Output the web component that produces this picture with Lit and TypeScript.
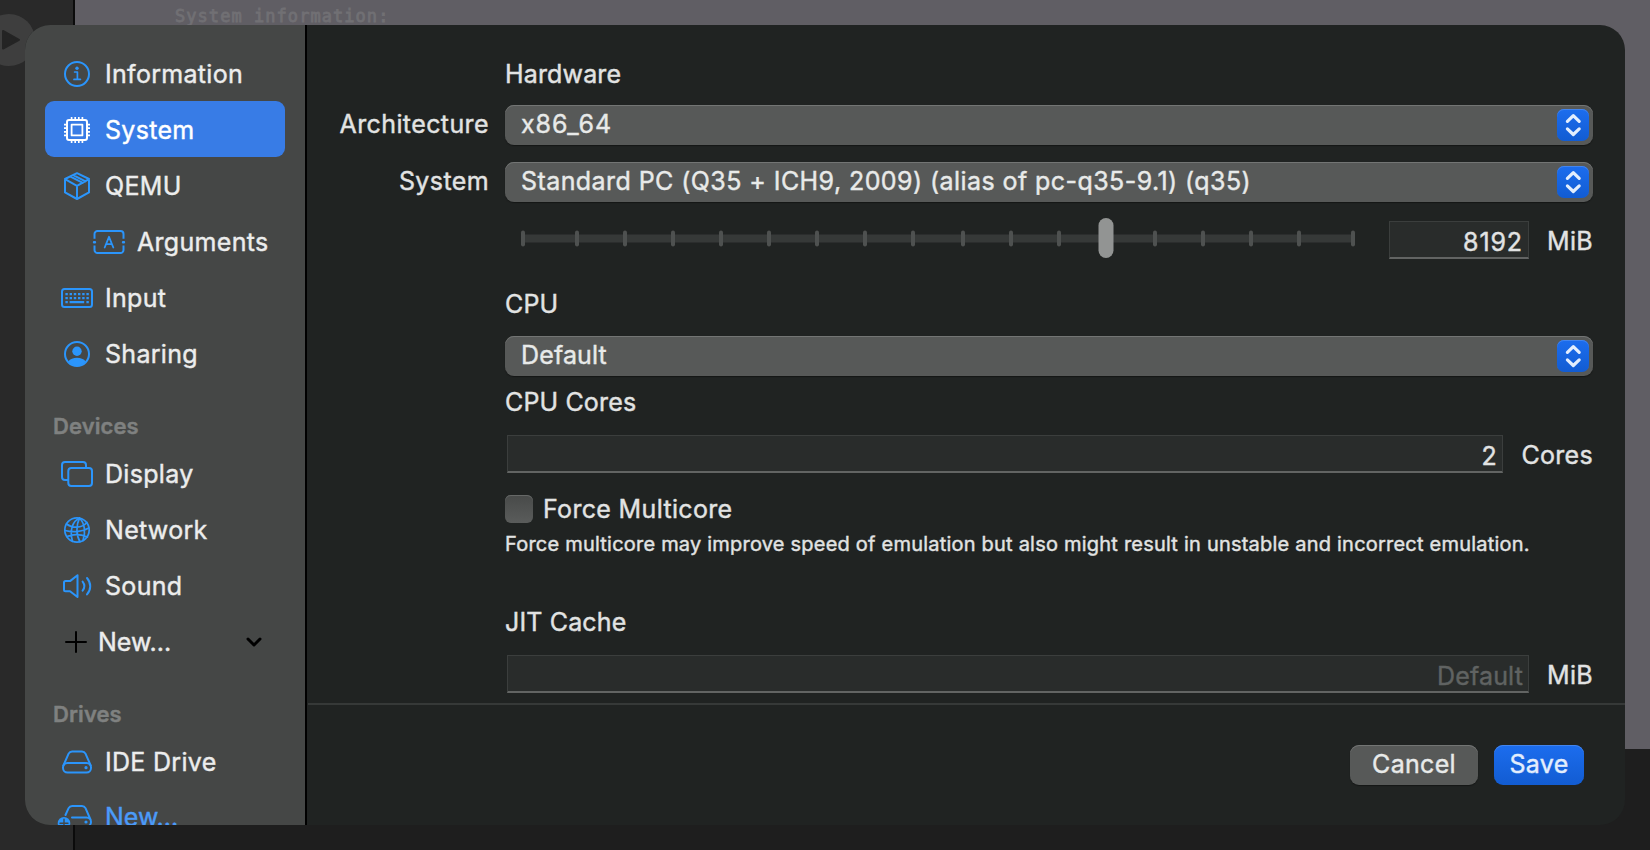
import { LitElement, html, css, svg } from "lit";
import { customElement } from "lit/decorators.js";

const ic = {
  info: svg`<circle cx="17" cy="17" r="12"/><circle cx="17" cy="11.2" r="1.7" fill="currentColor" stroke="none"/><path d="M14.6 15h2.8v7.2M14 22.4h6.4" stroke-width="1.7"/>`,
  chip: svg`<rect x="7" y="7" width="20" height="20" rx="2"/><rect x="11.6" y="11.6" width="10.8" height="10.8" stroke-width="1.8"/><path stroke-width="1.7" stroke-linecap="butt" d="M11.6 4v3M15.2 4v3M18.8 4v3M22.4 4v3M11.6 27v3M15.2 27v3M18.8 27v3M22.4 27v3M4 11.6h3M4 15.2h3M4 18.8h3M4 22.4h3M27 11.6h3M27 15.2h3M27 18.8h3M27 22.4h3"/>`,
  box: svg`<path d="M17 4.2 29 10v13.4L17 30 5 23.400V10zM5 10.200l12 6.600 12-6.600M17 16.800V30M10.500 7.600l12.300 6.300M13.200 6.200l12.300 6.200"/>`,
  args: svg`<path stroke-linecap="butt" d="M2.500 13.800V9a3 3 0 0 1 3-3H28.500a3 3 0 0 1 3 3V13.800M2.500 20.600v4.400a3 3 0 0 0 3 3H28.500a3 3 0 0 0 3-3V20.600"/><path d="M2 17.200h1M31 17.200h1" stroke-width="2.400"/><path d="M12.700 22.500 17 11.800l4.300 10.700M14.200 19.200h5.600" stroke-width="1.800"/>`,
  kbd: svg`<rect x="2" y="8" width="30" height="18" rx="2.500"/><g stroke-linecap="butt" stroke-width="2.200"><path d="M5.400 13.100H29M5.400 17.100H29" stroke-dasharray="2.400 1.800"/><path d="M5.400 21.200h2.400M9.600 21.200h14.600M26.400 21.200h2.400"/></g>`,
  user: svg`<circle cx="17" cy="17" r="12"/><circle cx="17" cy="14.200" r="4.700" fill="currentColor" stroke="none"/><path d="M8.300 24.500c3.500-5 13.900-5 17.400 0-4 5.600-13.400 5.600-17.400 0z" fill="currentColor" stroke="none"/>`,
  display: svg`<path d="M8 23H5a3 3 0 0 1-3-3V8a3 3 0 0 1 3-3h18a3 3 0 0 1 3 3v2"/><rect x="8.300" y="11" width="23.700" height="18" rx="3"/>`,
  globe: svg`<g stroke-width="1.700"><circle cx="17" cy="17" r="12.200"/><path d="M19.500 5C12 8.500 9.500 18 12.500 28.500M19.500 5C16 12 16 22 20 28.800M19.500 5c5 5 6.500 14 3.500 22.500M6.500 11c6 4.500 15 4.500 20.500-1.500M5 17.500c8 2 17 1 23.800-2.500M7 23.500c6-2.500 14-2 20.500.5"/></g>`,
  sound: svg`<path d="M4 13.600a1.500 1.500 0 0 1 1.500-1.500H10L17.500 6.200V28L10 22.300H5.500A1.500 1.500 0 0 1 4 20.800z"/><path d="M22.600 12.600c2.200 2.800 2.200 6.200 0 9M27 9c4.300 5 4.300 11.400 0 16.400"/>`,
  drive: svg`<path d="M3.400 20.500 8.600 8.600a4 4 0 0 1 3.500-2.100H22a4 4 0 0 1 3.500 2.100l5.200 11.900"/><rect x="3" y="18" width="28" height="9.500" rx="4.500"/><circle cx="26" cy="22.700" r="1.600" fill="currentColor" stroke="none"/>`,
};
const drvNew = svg`<path d="M5.500 15 8.600 8.100a4 4 0 0 1 3.500-2.100H22a4 4 0 0 1 3.500 2.100l5.200 11.900M12 17.500h14.500a4.500 4.500 0 0 1 0 9H10"/><circle cx="26" cy="22" r="1.600" fill="currentColor" stroke="none"/><circle cx="4" cy="23.300" r="6.300" fill="currentColor" stroke="none"/><path d="M4 19.300v8M0 23.300h8" stroke="#454746" stroke-width="1.400"/>`;

const icon = (g: unknown) => html`<svg class="ico" viewBox="0 0 34 34">${g}</svg>`;
const item = (g: unknown, t: string, c = "") => html`<div class="item ${c}">${icon(g)}<span>${t}</span></div>`;
const select = (t: string, c = "") => html`<div class="select ${c}"><span>${t}</span><div class="knob"><svg viewBox="0 0 32 32"><path d="M10.400 12.300 16.300 6.600l5.900 5.700M10.400 19.900l5.900 5.600 5.900-5.600"/></svg></div></div>`;

@customElement("app-root")
export class AppRoot extends LitElement {
  static styles = css`
    :host { display: block; position: relative; width: 1650px; height: 850px; overflow: hidden; background: #1e1e1e;
      font: 400 25px/32px Inter, "Liberation Sans", sans-serif; color: #e2e3e3; letter-spacing: .15px; -webkit-text-stroke: .4px currentColor; }
    * { box-sizing: border-box; }
    svg { fill: none; stroke: currentColor; stroke-width: 2; stroke-linecap: round; stroke-linejoin: round; overflow: visible; display: block; }
    .backdrop { position: absolute; inset: 0; display: grid; grid-template-columns: 73px 2px 1fr; grid-template-rows: 749px 1fr; }
    .rail { grid-row: 1 / 3; background: #292929; }
    .edge { grid-row: 1 / 3; background: #0b0b0b; }
    .console { background: #605e64; color: #717074; overflow: hidden; }
    .console p { margin: 7px 0 0 100px; letter-spacing: 1.050px; white-space: pre; font: 17px/18px "DejaVu Sans Mono", monospace; -webkit-text-stroke: .8px currentColor; }
    .play { position: absolute; left: -17px; top: 14px; width: 52px; height: 52px; border-radius: 50%; background: #3e3e3e; color: #242424; }
    .play svg { width: 52px; height: 52px; }
    .sheet { position: absolute; left: 25px; top: 25px; width: 1600px; height: 800px; border-radius: 25px; overflow: hidden; display: flex; background: #202322; }
    .side { width: 282px; border-right: 2px solid #000; background: #454746; padding: 20px 20px 0; flex: none; color: #eceded; letter-spacing: .3px; }
    .item { height: 56px; display: flex; align-items: center; padding: 2px 0 0 15px; border-radius: 9px; white-space: nowrap; }
    .item .ico { width: 34px; height: 34px; margin-right: 11px; color: #2b95fb; flex: none; }
    .item.on { background: #387ce6; color: #fff; }
    .item.on .ico { color: #fff; }
    .item.sub { padding-left: 47px; }
    .item.last { color: #4b9bfa; padding-top: 0; letter-spacing: 0; }
    .head { height: 48px; margin-top: 16px; padding: 13px 0 0 8px; font-size: 22px; font-weight: 600; color: #7f8180; letter-spacing: .1px; }
    .new { height: 56px; display: flex; align-items: center; padding: 2px 19px 0 20px; letter-spacing: 0; }
    .new svg { color: #000; }
    .new .plus { width: 22px; height: 22px; margin-right: 11px; }
    .new .chev { width: 16px; height: 10px; margin-left: auto; margin-right: 4px; stroke-width: 3; }
    .main { flex: 1; display: flex; flex-direction: column; min-width: 0; }
    .form { height: 680px; padding: 33px 32px 0 23px; border-bottom: 2px solid #363938; margin-left: 1px; display: grid; grid-template-columns: 158px 1088px; column-gap: 16px; align-content: start; flex: none; }
    .lab { text-align: right; white-space: nowrap; padding-top: 3px; letter-spacing: .4px; }
    .c2 { grid-column: 2; }
    .select { height: 40px; border-radius: 9px; background: #575958; box-shadow: inset 0 1px #737574, 0 1px 1px #151716; padding: 0 4px 0 16px; display: flex; justify-content: space-between; align-items: center; color: #e8eae9; }
    .select.arch { letter-spacing: .95px; }
    .select.machine { letter-spacing: .43px; }
    .select span { margin-top: -3px; }
    .knob { width: 32px; height: 32px; border-radius: 7px; background: linear-gradient(#1c6dee, #125cd2); box-shadow: inset 0 1px #4385ee; color: #e3eefd; }
    .knob svg { width: 32px; height: 32px; stroke-width: 3.200; }
    .title { height: 47px; }
    .cell { height: 57px; }
    .row { display: flex; align-items: center; }
    .memory { height: 42px; }
    .cpu { margin-top: 27px; height: 48px; }
    .cores { margin-top: 10px; }
    .entry { margin: 17px 0 0 2px; }
    .force { margin-top: 20px; letter-spacing: .33px; }
    .slider { height: 40px; width: 834px; margin-left: 16px; }
    .field { height: 38px; background: #292c2b; border: 1px solid #3b3e3d; border-bottom: 2px solid #626463; text-align: right; line-height: 40px; padding-right: 5px; }
    .w-mem { width: 140px; margin-left: 34px; letter-spacing: .9px; }
    .w-cores { width: 996px; }
    .w-jit { width: 1022px; color: #606362; }
    .unit { margin-left: auto; padding-top: 1px; letter-spacing: .3px; }
    .box { width: 28px; height: 28px; border-radius: 6px; background: linear-gradient(#484a49, #5a5c5b); box-shadow: inset 0 1px #666867; margin-right: 10px; }
    .note { font-size: 20px; line-height: 26px; white-space: nowrap; letter-spacing: .215px; margin-top: 6px; }
    .jit { margin-top: 49px; }
    .foot { display: flex; justify-content: flex-end; gap: 16px; padding: 40px 41px 0 0; letter-spacing: .3px; }
    .btn { height: 40px; border-radius: 9px; line-height: 38px; text-align: center; background: #575958; box-shadow: inset 0 1px #737574, 0 1px 1px #151716; color: #e8eae9; }
    .cancel { width: 128px; }
    .save { width: 90px; background: linear-gradient(#1c6dee, #125cd2); box-shadow: inset 0 1px #4385ee; color: #e3eefd; }
  `;

  render() {
    const ticks = [523, 577, 625, 673, 721, 769, 817, 865, 913, 963, 1011, 1059, 1155, 1203, 1251, 1299, 1353];
    return html`
      <div class="backdrop"><div class="rail"></div><div class="edge"></div><div class="console"><p>System information:</p></div></div>
      <div class="play"><svg viewBox="0 0 52 52"><path d="M20 17v17.500l16-8.700z" fill="currentColor"/></svg></div>
      <div class="sheet">
        <nav class="side">
          ${item(ic.info, "Information")}${item(ic.chip, "System", "on")}${item(ic.box, "QEMU")}
          ${item(ic.args, "Arguments", "sub")}${item(ic.kbd, "Input")}${item(ic.user, "Sharing")}
          <div class="head">Devices</div>
          ${item(ic.display, "Display")}${item(ic.globe, "Network")}${item(ic.sound, "Sound")}
          <div class="new"><svg class="plus" viewBox="0 0 22 22"><path d="M11 1v20M1 11h20"/></svg><span>New...</span>
            <svg class="chev" viewBox="0 0 16 10"><path d="M2 2l6 6 6-6"/></svg></div>
          <div class="head">Drives</div>
          ${item(ic.drive, "IDE Drive")}${item(drvNew, "New...", "last")}
        </nav>
        <main class="main">
          <section class="form">
            <div class="c2 title">Hardware</div>
            <div class="lab">Architecture</div>
            <div class="cell">${select("x86_64", "arch")}</div>
            <div class="lab">System</div>
            <div class="cell">${select("Standard PC (Q35 + ICH9, 2009) (alias of pc-q35-9.1) (q35)", "machine")}</div>
            <div class="c2 row memory">
              <svg class="slider" viewBox="521 0 834 40"><path d="M523 18.500H1353" stroke="#363938" stroke-width="8" stroke-linecap="butt"/>
                ${ticks.map(x => svg`<path d="M${x} 12.500v12" stroke="#4e5150" stroke-width="4"/>`)}
                <rect x="1098.500" y="-2" width="15" height="40" rx="7.500" fill="#929493" stroke="none"/></svg>
              <div class="field w-mem">8192</div><span class="unit">MiB</span>
            </div>
            <div class="c2 cpu">CPU</div>
            <div class="c2">${select("Default")}</div>
            <div class="c2 cores">CPU Cores</div>
            <div class="c2 row entry"><div class="field w-cores">2</div><span class="unit">Cores</span></div>
            <div class="c2 row force"><i class="box"></i>Force Multicore</div>
            <div class="c2 note">Force multicore may improve speed of emulation but also might result in unstable and incorrect emulation.</div>
            <div class="c2 jit">JIT Cache</div>
            <div class="c2 row entry"><div class="field w-jit">Default</div><span class="unit">MiB</span></div>
          </section>
          <footer class="foot"><div class="btn cancel">Cancel</div><div class="btn save">Save</div></footer>
        </main>
      </div>`;
  }
}
